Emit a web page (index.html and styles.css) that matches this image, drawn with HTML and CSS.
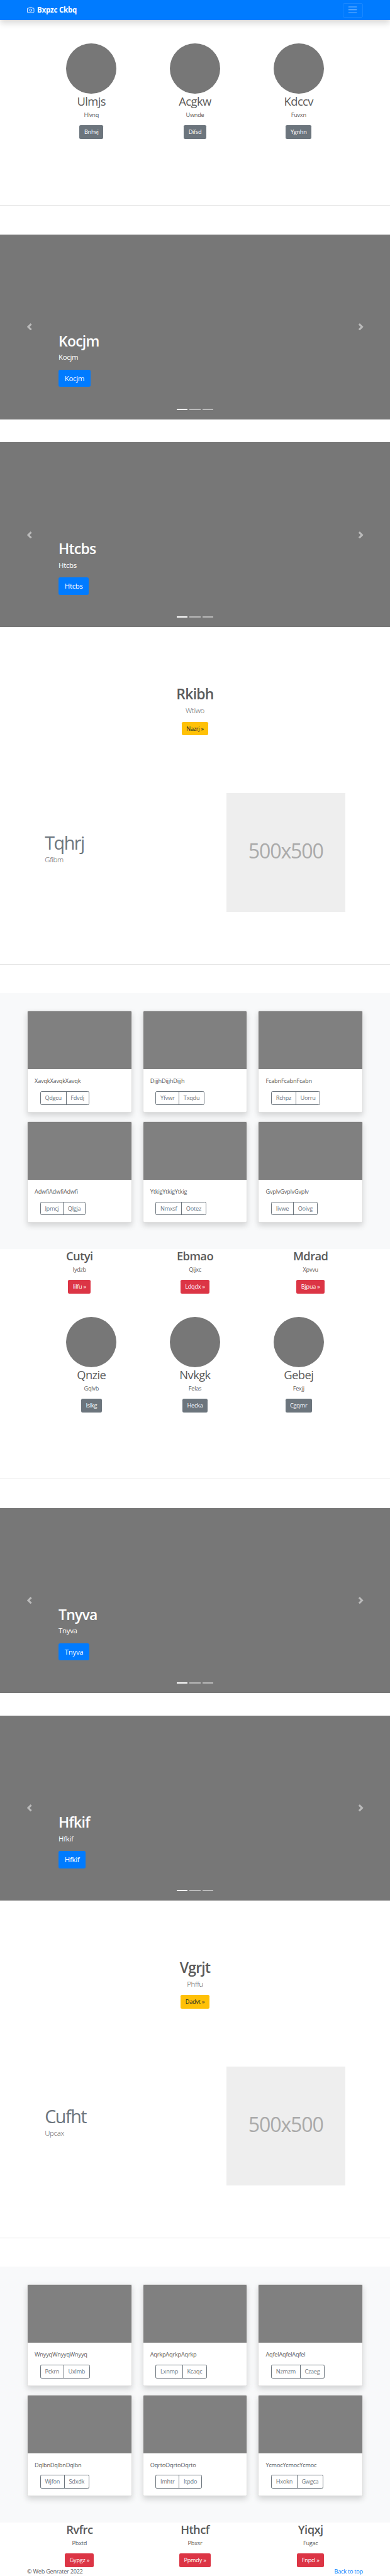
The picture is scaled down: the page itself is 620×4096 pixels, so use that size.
FILE: index.html
```
<!DOCTYPE html>
<html lang="en">
<head>
<meta charset="utf-8">
<title>Bxpzc Ckbq</title>
<link rel="stylesheet" href="styles.css">
</head>
<body>
<header class="navbar">
  <a class="brand"><svg class="brand-icon" viewBox="0 0 24 24" fill="none" stroke="currentColor" stroke-width="1.8" stroke-linecap="round" stroke-linejoin="round"><path d="M23 19a2 2 0 0 1-2 2H3a2 2 0 0 1-2-2V8a2 2 0 0 1 2-2h4l2-3h6l2 3h4a2 2 0 0 1 2 2z"/><circle cx="12" cy="13" r="4"/></svg><strong>Bxpzc Ckbq</strong></a>
  <span class="toggler"><svg class="toggler-icon" viewBox="0 0 30 30" fill="none" stroke="#fff" stroke-opacity=".5" stroke-width="2" stroke-linecap="round"><path d="M4 7h22M4 15h22M4 23h22"/></svg></span>
</header>
<main>
  <section class="people">
    <div class="person"><div class="avatar"></div><h2>Ulmjs</h2><p>Hlvnq</p><a class="btn btn-gray">Bnhvj</a></div>
    <div class="person"><div class="avatar"></div><h2>Acgkw</h2><p>Uwnde</p><a class="btn btn-gray">Difsd</a></div>
    <div class="person"><div class="avatar"></div><h2>Kdccv</h2><p>Fuvxn</p><a class="btn btn-gray">Ygnhn</a></div>
  </section>
  <hr class="divider">
  <section class="carousel">
    <span class="control"><svg viewBox="0 0 8 8" fill="#fff"><path d="M5.250 0l-4 4 4 4 1.500-1.500L4.250 4l2.500-2.500L5.250 0z"/></svg></span>
    <div class="caption"><h1>Kocjm</h1><p>Kocjm</p><a class="btn btn-blue">Kocjm</a></div>
    <span class="control"><svg viewBox="0 0 8 8" fill="#fff"><path d="M2.750 0l-1.500 1.500L3.750 4l-2.500 2.500L2.750 8l4-4-4-4z"/></svg></span>
    <div class="indicators"><i class="on"></i><i></i><i></i></div>
  </section>
  <section class="carousel">
    <span class="control"><svg viewBox="0 0 8 8" fill="#fff"><path d="M5.250 0l-4 4 4 4 1.500-1.500L4.250 4l2.500-2.500L5.250 0z"/></svg></span>
    <div class="caption"><h1>Htcbs</h1><p>Htcbs</p><a class="btn btn-blue">Htcbs</a></div>
    <span class="control"><svg viewBox="0 0 8 8" fill="#fff"><path d="M2.750 0l-1.500 1.500L3.750 4l-2.500 2.500L2.750 8l4-4-4-4z"/></svg></span>
    <div class="indicators"><i class="on"></i><i></i><i></i></div>
  </section>
  <section class="intro"><h1>Rkibh</h1><p class="lead">Wtiwo</p><a class="btn btn-yellow">Nazrj »</a></section>
  <section class="featurette">
    <div class="featurette-text"><h2>Tqhrj</h2><p class="lead">Gfibm</p></div>
    <div class="placeholder">500x500</div>
  </section>
  <hr class="divider">
  <section class="album">
    <article class="card"><div class="thumb"></div><div class="card-body"><p>XavqkXavqkXavqk</p><div class="group"><span>Qdgcu</span><span>Fdvdj</span></div></div></article>
    <article class="card"><div class="thumb"></div><div class="card-body"><p>DijjhDijjhDijjh</p><div class="group"><span>Yfvwr</span><span>Txqdu</span></div></div></article>
    <article class="card"><div class="thumb"></div><div class="card-body"><p>FcabnFcabnFcabn</p><div class="group"><span>Rchpz</span><span>Uorru</span></div></div></article>
    <article class="card"><div class="thumb"></div><div class="card-body"><p>AdwfiAdwfiAdwfi</p><div class="group"><span>Jpmcj</span><span>Qlgja</span></div></div></article>
    <article class="card"><div class="thumb"></div><div class="card-body"><p>YtkigYtkigYtkig</p><div class="group"><span>Nmxsf</span><span>Ootez</span></div></div></article>
    <article class="card"><div class="thumb"></div><div class="card-body"><p>GvplvGvplvGvplv</p><div class="group"><span>Iivwe</span><span>Ooivg</span></div></div></article>
  </section>
  <section class="columns">
    <div class="column"><h2>Cutyi</h2><p>Iydzb</p><a class="btn btn-red">Iilfu »</a></div>
    <div class="column"><h2>Ebmao</h2><p>Qijxc</p><a class="btn btn-red">Ldqdx »</a></div>
    <div class="column"><h2>Mdrad</h2><p>Xpvvu</p><a class="btn btn-red">Bjpua »</a></div>
  </section>
  <section class="people">
    <div class="person"><div class="avatar"></div><h2>Qnzie</h2><p>Gqlvb</p><a class="btn btn-gray">Islkg</a></div>
    <div class="person"><div class="avatar"></div><h2>Nvkgk</h2><p>Felas</p><a class="btn btn-gray">Hecka</a></div>
    <div class="person"><div class="avatar"></div><h2>Gebej</h2><p>Fexjj</p><a class="btn btn-gray">Cgqmr</a></div>
  </section>
  <hr class="divider">
  <section class="carousel">
    <span class="control"><svg viewBox="0 0 8 8" fill="#fff"><path d="M5.250 0l-4 4 4 4 1.500-1.500L4.250 4l2.500-2.500L5.250 0z"/></svg></span>
    <div class="caption"><h1>Tnyva</h1><p>Tnyva</p><a class="btn btn-blue">Tnyva</a></div>
    <span class="control"><svg viewBox="0 0 8 8" fill="#fff"><path d="M2.750 0l-1.500 1.500L3.750 4l-2.500 2.500L2.750 8l4-4-4-4z"/></svg></span>
    <div class="indicators"><i class="on"></i><i></i><i></i></div>
  </section>
  <section class="carousel">
    <span class="control"><svg viewBox="0 0 8 8" fill="#fff"><path d="M5.250 0l-4 4 4 4 1.500-1.500L4.250 4l2.500-2.500L5.250 0z"/></svg></span>
    <div class="caption"><h1>Hfkif</h1><p>Hfkif</p><a class="btn btn-blue">Hfkif</a></div>
    <span class="control"><svg viewBox="0 0 8 8" fill="#fff"><path d="M2.750 0l-1.500 1.500L3.750 4l-2.500 2.500L2.750 8l4-4-4-4z"/></svg></span>
    <div class="indicators"><i class="on"></i><i></i><i></i></div>
  </section>
  <section class="intro"><h1>Vgrjt</h1><p class="lead">Phffu</p><a class="btn btn-yellow">Dadvt »</a></section>
  <section class="featurette">
    <div class="featurette-text"><h2>Cufht</h2><p class="lead">Upcax</p></div>
    <div class="placeholder">500x500</div>
  </section>
  <hr class="divider">
  <section class="album">
    <article class="card"><div class="thumb"></div><div class="card-body"><p>WnyyqWnyyqWnyyq</p><div class="group"><span>Pckrn</span><span>Uxlmb</span></div></div></article>
    <article class="card"><div class="thumb"></div><div class="card-body"><p>AqrkpAqrkpAqrkp</p><div class="group"><span>Lxnmp</span><span>Kcaqc</span></div></div></article>
    <article class="card"><div class="thumb"></div><div class="card-body"><p>AqfelAqfelAqfel</p><div class="group"><span>Nzmzm</span><span>Czaeg</span></div></div></article>
    <article class="card"><div class="thumb"></div><div class="card-body"><p>DqlbnDqlbnDqlbn</p><div class="group"><span>Wjfon</span><span>Sdxdk</span></div></div></article>
    <article class="card"><div class="thumb"></div><div class="card-body"><p>OqrtoOqrtoOqrto</p><div class="group"><span>Imhtr</span><span>Itpdo</span></div></div></article>
    <article class="card"><div class="thumb"></div><div class="card-body"><p>YcmocYcmocYcmoc</p><div class="group"><span>Hxokn</span><span>Gwgca</span></div></div></article>
  </section>
  <section class="columns">
    <div class="column"><h2>Rvfrc</h2><p>Pbxtd</p><a class="btn btn-red">Gypgz »</a></div>
    <div class="column"><h2>Hthcf</h2><p>Pbxsr</p><a class="btn btn-red">Ppmdy »</a></div>
    <div class="column"><h2>Yiqxj</h2><p>Fugac</p><a class="btn btn-red">Fnpcl »</a></div>
  </section>
</main>
<footer class="footer"><span>© Web Genrater 2022</span><a>Back to top</a></footer>
</body>
</html>
```
FILE: styles.css
```
* { box-sizing: border-box; letter-spacing: -.028em; }
html { font-size: 9.1837px; }
body {
  margin: 0;
  background: #fff;
  color: #5a5a5a;
  font: 1rem/1.5 "Open Sans", "Noto Sans", sans-serif;
  overflow-x: hidden;
}
h1, h2, p { margin: 0; }
h1, h2 { line-height: 1.2; padding-top: .06rem; margin-bottom: .44rem; letter-spacing: -.032em; }
h1 { font-size: 2.5rem; font-weight: 600; }
h2 { font-size: 2rem; }
p { margin-bottom: 1rem; }

.navbar {
  display: flex;
  align-items: center;
  justify-content: space-between;
  height: 3.5rem;
  padding: 0 4.6875rem;
  background: #007bff;
  box-shadow: 0 .5rem 1rem rgba(0, 0, 0, .15);
}
.brand { display: flex; align-items: center; color: #fff; font-size: 1.25rem; }
.brand strong { letter-spacing: -.018em; }
.brand-icon { width: 1.25rem; height: 1.25rem; margin-right: .5rem; }
.toggler {
  display: flex;
  align-items: center;
  justify-content: center;
  width: 3.5rem;
  height: 2.5rem;
  border: 1px solid rgba(255, 255, 255, .1);
  border-radius: .25rem;
}
.toggler-icon { width: 1.875rem; height: 1.875rem; }

.btn {
  display: block;
  width: fit-content;
  height: 2.375rem;
  padding: 0 .8125rem;
  border-radius: .25rem;
  line-height: 2.375rem;
  color: #fff;
}
.btn-gray { background: #6c757d; }
.btn-blue { background: #007bff; height: 3rem; padding: 0 1.0625rem; border-radius: .3rem; font-size: 1.25rem; line-height: 3rem; }
.btn-yellow { background: #ffc107; color: #212529; }
.btn-red { background: #dc3545; }

.people { display: flex; width: 53.8125rem; height: 23.025rem; margin: 4rem auto 0; }
.person, .column { flex: 1; display: flex; flex-direction: column; align-items: center; }
.person h2 { font-weight: 400; }
.avatar { width: 8.75rem; height: 8.75rem; border-radius: 50%; background: #777; }
.divider { height: 1px; margin: 5rem 0 4.95rem; border: 0; background: #e5e5e5; }

.carousel {
  position: relative;
  display: flex;
  justify-content: space-between;
  height: 32rem;
  margin-bottom: 4rem;
  background: #777;
  color: #fff;
}
.control { display: flex; width: 15%; align-items: center; justify-content: center; opacity: .5; }
.control svg { width: 1.25rem; height: 1.25rem; }
.caption { flex: 1; padding-top: 16.93rem; }
.caption p { font-size: 1.25rem; line-height: 1.4; margin-bottom: 1.25rem; }
.indicators { position: absolute; left: 0; right: 0; bottom: 1.625rem; display: flex; justify-content: center; gap: .375rem; }
.indicators i { width: 1.875rem; height: 2px; background: #fff; opacity: .5; }
.indicators .on { opacity: 1; }

.intro { display: flex; flex-direction: column; align-items: center; height: 24.7rem; padding-top: 6rem; }
.lead { font-size: 1.25rem; font-weight: 300; }
.featurette { display: flex; justify-content: space-between; height: 24.65rem; padding: 0 7.75rem; }
.featurette-text { padding-top: 7rem; }
.featurette h2 { font-size: 3.125rem; font-weight: 400; line-height: 1; color: #6c757d; letter-spacing: -.05em; }
.placeholder {
  display: flex;
  align-items: center;
  justify-content: center;
  width: 20.6rem;
  height: 20.6rem;
  padding-bottom: .4rem;
  background: #eee;
  color: #aaa;
  font-size: 3.5rem;
  letter-spacing: -.036em;
}

.album { display: grid; grid-template-columns: repeat(3, 1fr); gap: 1.5rem 1.875rem; height: 44.24rem; padding: 3rem 4.6875rem 4.5rem; background: #f8f9fa; }
.card { border: 1px solid #dfdfdf; border-radius: .25rem; background: #fff; box-shadow: 0 .5rem 1rem rgba(0, 0, 0, .15); overflow: hidden; }
.thumb { height: 10.07rem; background: #808080; }
.card-body { padding: 1.25rem 1.2rem; }
.card-body p { letter-spacing: -.022em; }
.group { display: flex; width: fit-content; height: 2.375rem; margin-left: .9375rem; border: 1px solid #6c757d; border-radius: .25rem; color: #6c757d; line-height: 2.2rem; }
.group span { padding: 0 .73rem; }
.group span + span { border-left: 1px solid #6c757d; }

.columns { display: flex; gap: 1.875rem; padding: 0 4.6875rem; }
.column h2 { font-weight: 600; }

.footer { display: flex; justify-content: space-between; padding: 0 4.6875rem; }
.footer a { color: #007bff; }
```
